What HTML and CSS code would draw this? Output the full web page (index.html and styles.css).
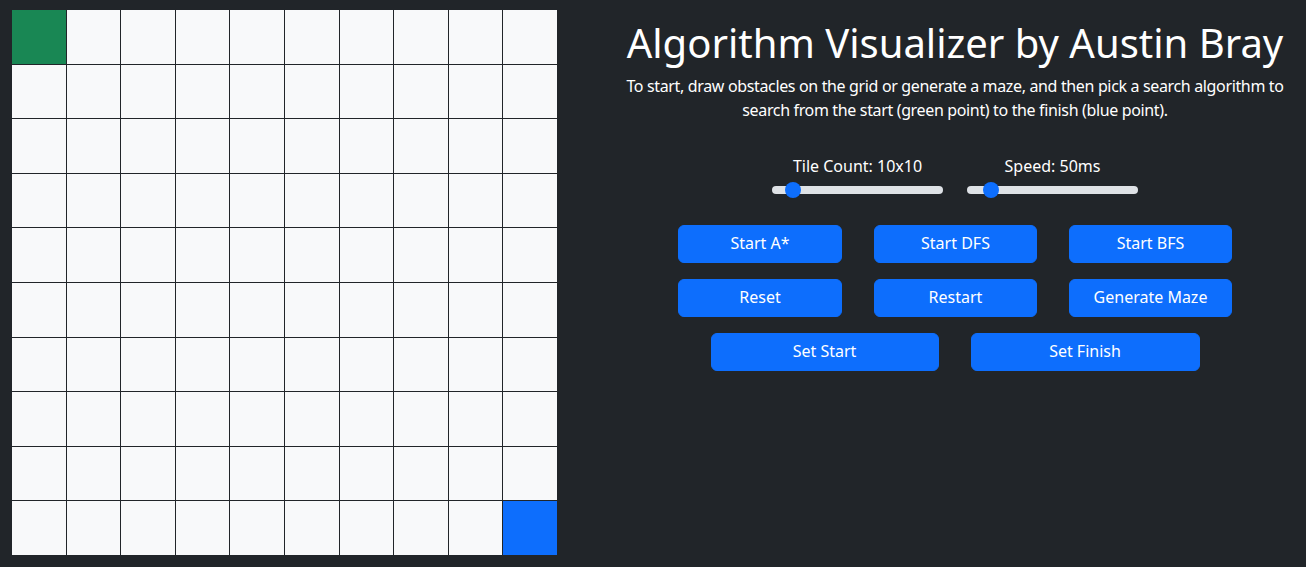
FILE: index.html
```html
<!DOCTYPE html>
<html lang="en">
<head>
<meta charset="utf-8">
<title>Algorithm Visualizer</title>
<link rel="stylesheet" href="styles.css">
</head>
<body>
<div class="app">
  <div class="board">
    <div class="cell start"></div><div class="cell"></div><div class="cell"></div><div class="cell"></div><div class="cell"></div><div class="cell"></div><div class="cell"></div><div class="cell"></div><div class="cell"></div><div class="cell"></div>
    <div class="cell"></div><div class="cell"></div><div class="cell"></div><div class="cell"></div><div class="cell"></div><div class="cell"></div><div class="cell"></div><div class="cell"></div><div class="cell"></div><div class="cell"></div>
    <div class="cell"></div><div class="cell"></div><div class="cell"></div><div class="cell"></div><div class="cell"></div><div class="cell"></div><div class="cell"></div><div class="cell"></div><div class="cell"></div><div class="cell"></div>
    <div class="cell"></div><div class="cell"></div><div class="cell"></div><div class="cell"></div><div class="cell"></div><div class="cell"></div><div class="cell"></div><div class="cell"></div><div class="cell"></div><div class="cell"></div>
    <div class="cell"></div><div class="cell"></div><div class="cell"></div><div class="cell"></div><div class="cell"></div><div class="cell"></div><div class="cell"></div><div class="cell"></div><div class="cell"></div><div class="cell"></div>
    <div class="cell"></div><div class="cell"></div><div class="cell"></div><div class="cell"></div><div class="cell"></div><div class="cell"></div><div class="cell"></div><div class="cell"></div><div class="cell"></div><div class="cell"></div>
    <div class="cell"></div><div class="cell"></div><div class="cell"></div><div class="cell"></div><div class="cell"></div><div class="cell"></div><div class="cell"></div><div class="cell"></div><div class="cell"></div><div class="cell"></div>
    <div class="cell"></div><div class="cell"></div><div class="cell"></div><div class="cell"></div><div class="cell"></div><div class="cell"></div><div class="cell"></div><div class="cell"></div><div class="cell"></div><div class="cell"></div>
    <div class="cell"></div><div class="cell"></div><div class="cell"></div><div class="cell"></div><div class="cell"></div><div class="cell"></div><div class="cell"></div><div class="cell"></div><div class="cell"></div><div class="cell"></div>
    <div class="cell"></div><div class="cell"></div><div class="cell"></div><div class="cell"></div><div class="cell"></div><div class="cell"></div><div class="cell"></div><div class="cell"></div><div class="cell"></div><div class="cell finish"></div>
  </div>
  <div class="panel">
    <h1 class="title">Algorithm Visualizer by Austin Bray</h1>
    <p class="intro">To start, draw obstacles on the grid or generate a maze, and then pick a search algorithm to search from the start (green point) to the finish (blue point).</p>
    <div class="sliders">
      <label class="slider">
        <span class="slider-label">Tile Count: 10x10</span>
        <input class="range" type="range" min="5" max="65" value="10">
      </label>
      <label class="slider">
        <span class="slider-label">Speed: 50ms</span>
        <input class="range" type="range" min="10" max="400" value="50">
      </label>
    </div>
    <div class="btn-row three">
      <button class="btn">Start A*</button>
      <button class="btn">Start DFS</button>
      <button class="btn">Start BFS</button>
    </div>
    <div class="btn-row three">
      <button class="btn">Reset</button>
      <button class="btn">Restart</button>
      <button class="btn">Generate Maze</button>
    </div>
    <div class="btn-row two">
      <button class="btn">Set Start</button>
      <button class="btn">Set Finish</button>
    </div>
  </div>
</div>
</body>
</html>
```
FILE: styles.css
```css
* { box-sizing: border-box; }

html, body {
  margin: 0;
  background: #212529;
  color: #ffffff;
  font-family: "Noto Sans", "Open Sans", sans-serif;
}

.app {
  display: flex;
  align-items: flex-start;
  padding: 10px 0 0 12px;
}

.board {
  width: 545px;
  height: 545px;
  flex: none;
  display: grid;
  grid-template-columns: repeat(10, 1fr);
  grid-template-rows: repeat(10, 1fr);
  gap: 1px;
  background: #212529;
}

.cell { background: #f8f9fa; }
.cell.start { background: #198754; }
.cell.finish { background: #0d6efd; }

.panel {
  flex: 1;
  margin-left: 47px;
  padding-top: 9px;
  text-align: center;
}

.title {
  margin: 0 0 7px;
  font-size: 40px;
  font-weight: 400;
  line-height: 48px;
}

.intro {
  margin: 0 auto;
  font-size: 16px;
  line-height: 24px;
  letter-spacing: -0.35px;
  max-width: 700px;
}

.sliders {
  display: flex;
  justify-content: center;
  gap: 24px;
  margin-top: 32px;
}

.slider {
  display: flex;
  flex-direction: column;
  align-items: center;
  width: 171px;
}

.slider-label {
  font-size: 16px;
  line-height: 24px;
}

.range {
  -webkit-appearance: none;
  appearance: none;
  width: 171px;
  height: 24px;
  margin: 0;
  padding: 0;
  background: transparent;
}

.range::-webkit-slider-runnable-track {
  height: 8px;
  border-radius: 16px;
  background: #dee2e6;
}

.range::-webkit-slider-thumb {
  -webkit-appearance: none;
  appearance: none;
  width: 16px;
  height: 16px;
  margin-top: -4px;
  border: 0;
  border-radius: 50%;
  background: #0d6efd;
}

.btn-row {
  display: grid;
  justify-content: center;
  column-gap: 32px;
  margin-top: 16px;
}

.btn-row.three { grid-template-columns: 164px 163px 163px; }
.btn-row.two { grid-template-columns: 228px 229px; }

.sliders + .btn-row { margin-top: 23px; }

.btn {
  height: 38px;
  padding: 5px 12px 7px;
  border: 1px solid #0d6efd;
  border-radius: 6px;
  background: #0d6efd;
  color: #ffffff;
  font-family: inherit;
  font-size: 16px;
  line-height: 24px;
}
```
